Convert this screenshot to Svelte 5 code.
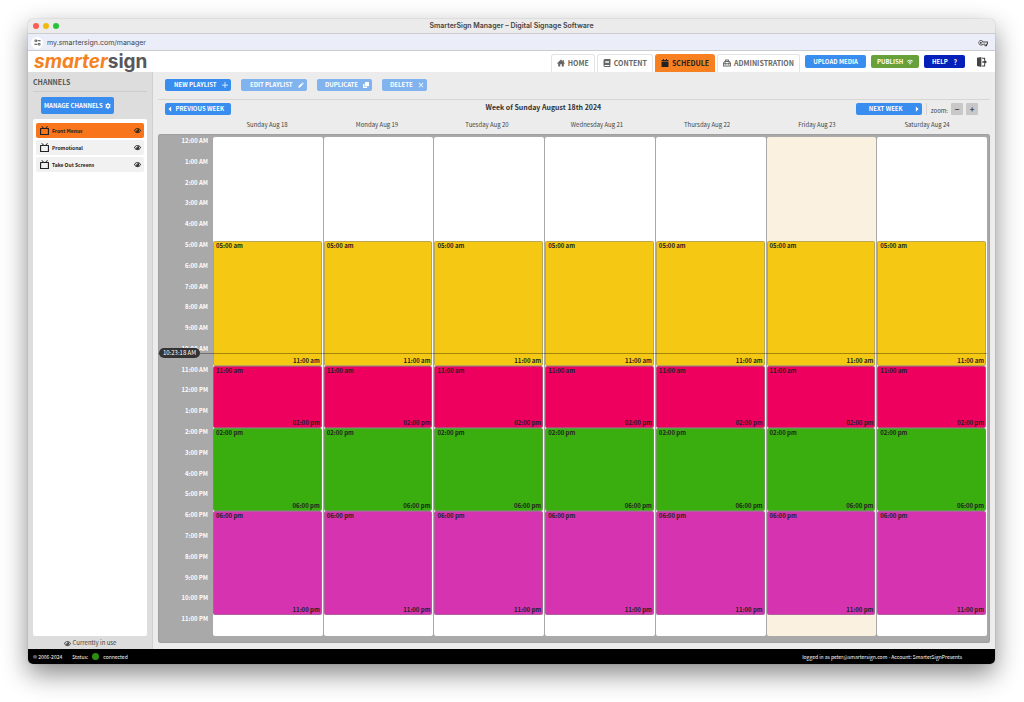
<script>
    let activeChannel = $state("Front Menus");
    let activeTab = $state("Schedule");

    const channels = ["Front Menus", "Promotional", "Take Out Screens"];
    const tabs = [
        { name: "Home", icon: "home" },
        { name: "Content", icon: "book" },
        { name: "Schedule", icon: "calendar" },
        { name: "Administration", icon: "briefcase" }
    ];
    const days = [
        "Sunday Aug 18",
        "Monday Aug 19",
        "Tuesday Aug 20",
        "Wednesday Aug 21",
        "Thursday Aug 22",
        "Friday Aug 23",
        "Saturday Aug 24"
    ];
    const today = "Friday Aug 23";

    const playlists = [
        { start: 5, end: 11, color: "#f5c813" },
        { start: 11, end: 14, color: "#ee005f" },
        { start: 14, end: 18, color: "#3aae0e" },
        { start: 18, end: 23, color: "#d633b0" }
    ];

    const now = { h: 10, m: 23, s: 18 };
    const nowTop = (now.h + now.m / 60 + now.s / 3600) / 24 * 100;

    const hours = Array.from({ length: 24 }, (_, h) => {
        return `${h % 12 || 12}:00 ${h < 12 ? "AM" : "PM"}`;
    });

    function eventTime(h) {
        return `${String(h % 12 || 12).padStart(2, "0")}:00 ${h < 12 ? "am" : "pm"}`;
    }
</script>

{#snippet icon(name)}
    <svg class="icon" viewBox="0 0 16 16" fill="currentColor" aria-hidden="true">
        {#if name === "home"}
            <path d="M8 1 0 8.400l1.200 1.200L2.400 8.600V15h4v-4.500h3.200V15h4V8.600l1.200 1L16 8.400l-2.400-2.200V2h-2v2.300z" />
        {:else if name === "book"}
            <path fill-rule="evenodd" d="M4 0h10q1 0 1 1v10q0 .7-.6 1v2q.6.200.6 1t-1 1H4Q1 16 1 13V3Q1 0 4 0zM4.500 4v1.300h7.500V4zM4.500 6.700V8h7.500V6.700zM4 12q-1 0-1 1t1 1h8.500v-2z" />
        {:else if name === "calendar"}
            <path d="M4 0h2v2h4V0h2v2h2q1 0 1 1v2H1V3q0-1 1-1h2zM1 6h14v9q0 1-1 1H2q-1 0-1-1z" />
        {:else if name === "briefcase"}
            <path fill-rule="evenodd" d="M4 4V2Q4 1 5 1h6q1 0 1 1v2h1l3 4v6q0 1-1 1H1q-1 0-1-1V8l3-4zM5.800 4h4.400V2.800H5.800zM4 5.800 2.200 8.300H4.500V7H6v1.300h4V7h1.500v1.300h2.300L12 5.800zM1.800 10.500v2.700h12.400v-2.700h-2.700v1H10v-1H6v1H4.500v-1z" />
        {:else if name === "plus"}
            <path d="M7 0h2v7h7v2H9v7H7V9H0V7h7z" />
        {:else if name === "pencil"}
            <path d="M12 0.500 15.500 4 13.700 5.800 10.200 2.300zM9.300 3.200l3.500 3.500L5 14.500 0.500 15.500 1.500 11z" />
        {:else if name === "copy"}
            <path d="M6 0h9q1 0 1 1v9q0 1-1 1H6q-1 0-1-1V1q0-1 1-1zM1 5h2.500v7.500H11V15q0 1-1 1H1q-1 0-1-1V6q0-1 1-1z" />
        {:else if name === "close"}
            <path d="m3 1.600 5 5 5-5L14.400 3l-5 5 5 5-1.400 1.400-5-5-5 5L1.600 13l5-5-5-5z" />
        {:else if name === "left"}
            <path d="M11 1v14L4 8z" />
        {:else if name === "right"}
            <path d="M5 1v14l7-7z" />
        {:else if name === "wifi"}
            <path d="M8 15 5.500 11.500q2.500-2 5 0zM0 5.500q8-7 16 0L14.500 7q-6.500-5.500-13 0zM2.800 8.500q5.200-4.500 10.400 0L11.800 10Q8 7 4.200 10z" />
        {:else if name === "gear"}
            <path fill-rule="evenodd" d="M6.500 0h3l.5 2.400 1.300.8 2.400-.8 1.500 2.600-1.900 1.600v1.800l1.900 1.600-1.500 2.600-2.400-.8-1.300.8L9.500 16h-3L6 13.600l-1.300-.8-2.400.8L.8 11l1.900-1.600V7.600L.8 5l1.500-2.600 2.400.8L6 2.400zM8 5.300a2.700 2.700 0 1 0 0 5.400 2.700 2.700 0 0 0 0-5.400z" />
        {:else if name === "eye"}
            <path fill-rule="evenodd" d="M8 2q5.500 0 8 6-2.500 6-8 6T0 8q2.500-6 8-6zm0 1.800Q4 3.800 2 8q2 4.200 6 4.200T14 8q-2-4.200-6-4.200z" />
            <path d="M8 4.200A3.800 3.800 0 1 1 4.200 8H8z" />
        {:else if name === "tv"}
            <path fill-rule="evenodd" d="M3.500 0 7 3.500h2.500L13 0l1 1-2.500 2.500H15q1 0 1 1V15q0 1-1 1H1q-1 0-1-1V4.500q0-1 1-1h4L2.500 1zM2 5.500V14h12V5.500z" />
        {:else if name === "logout"}
            <path d="M0 1 7 0v16l-7-1.500zM8 1h5v4h-1.600V2.600H8zM8 13.400h3.400V11H13v4H8zM8.500 6.800H11.500V4L16 8l-4.500 4V9.200H8.500z" />
        {:else if name === "key"}
            <path fill-rule="evenodd" d="M4.500 3a4.500 4.500 0 0 1 4 2.500H16v5h-1.500V13h-4v-2.500h-2A4.500 4.500 0 1 1 4.500 3zm0 1.400a3.100 3.100 0 1 0 3 4.600h4.400v2.600H13V9h1.600V7H7.500a3.100 3.100 0 0 0-3-2.600zm0 1.400a1.700 1.700 0 1 1 0 3.400 1.700 1.700 0 0 1 0-3.400z" />
        {:else if name === "tune"}
            <path fill-rule="evenodd" d="M4 1a3 3 0 1 1 0 6 3 3 0 0 1 0-6zm0 1.800a1.200 1.200 0 1 0 0 2.400 1.200 1.200 0 0 0 0-2.400zM8 3h7v2H8zM1 11h7v2H1zM12 9a3 3 0 1 1 0 6 3 3 0 0 1 0-6zm0 1.800a1.200 1.200 0 1 0 0 2.400 1.200 1.200 0 0 0 0-2.400z" />
        {/if}
    </svg>
{/snippet}

<div class="window">
    <div class="titlebar">
        <div class="lights"><i class="red"></i><i class="yellow"></i><i class="green"></i></div>
        <span>SmarterSign Manager – Digital Signage Software</span>
    </div>
    <div class="urlbar">
        <span class="site">{@render icon("tune")}</span>
        <span class="url">my.smartersign.com/manager</span>
        <span class="key">{@render icon("key")}</span>
    </div>

    <header>
        <a class="logo" href="/"><span>smarter</span>sign</a>
        <nav>
            {#each tabs as tab}
                <a href="#{tab.icon}" class:active={activeTab === tab.name} onclick={() => activeTab = tab.name}>
                    {@render icon(tab.icon)}{tab.name}
                </a>
            {/each}
        </nav>
        <div class="actions">
            <button class="btn upload">Upload Media</button>
            <button class="btn publish">Publish {@render icon("wifi")}</button>
            <button class="btn help">Help <span class="mark">?</span></button>
        </div>
        <button class="logout" aria-label="Log out">{@render icon("logout")}</button>
    </header>

    <div class="content">
        <aside>
            <h2>Channels</h2>
            <button class="btn manage">Manage Channels {@render icon("gear")}</button>
            <ul class="channels">
                {#each channels as channel}
                    <li>
                        <button class:active={activeChannel === channel} onclick={() => activeChannel = channel}>
                            <span class="tv">{@render icon("tv")}</span>
                            <span class="name">{channel}</span>
                            <span class="eye">{@render icon("eye")}</span>
                        </button>
                    </li>
                {/each}
            </ul>
            <p class="legend"><span class="eye">{@render icon("eye")}</span> Currently in use</p>
        </aside>

        <main>
            <div class="toolbar">
                <button class="btn wide">New Playlist {@render icon("plus")}</button>
                <button class="btn wide" disabled>Edit Playlist {@render icon("pencil")}</button>
                <button class="btn duplicate" disabled>Duplicate {@render icon("copy")}</button>
                <button class="btn delete" disabled>Delete {@render icon("close")}</button>
            </div>
            <div class="weekbar">
                <button class="btn wide prev">{@render icon("left")} Previous Week</button>
                <h1>Week of Sunday August 18th 2024</h1>
                <button class="btn wide next">Next Week {@render icon("right")}</button>
                <div class="zoom">
                    <span>zoom:</span>
                    <button aria-label="Zoom out">−</button>
                    <button aria-label="Zoom in">+</button>
                </div>
            </div>
            <div class="day-names">
                {#each days as day}
                    <span>{day}</span>
                {/each}
            </div>
            <div class="schedule">
                <div class="board">
                    <div class="hours">
                        {#each hours as hour}
                            <span>{hour}</span>
                        {/each}
                    </div>
                    <div class="days">
                        {#each days as day}
                            <div class="day" class:today={day === today}>
                                {#each playlists as item}
                                    <div class="event" style="grid-row: {item.start + 1} / {item.end + 1}; background-color: {item.color}">
                                        <span>{eventTime(item.start)}</span>
                                        <span class="end">{eventTime(item.end)}</span>
                                    </div>
                                {/each}
                            </div>
                        {/each}
                    </div>
                    <div class="now" style="top: {nowTop}%">
                        <span>{now.h}:{now.m}:{now.s} AM</span>
                    </div>
                </div>
            </div>
        </main>
    </div>

    <footer>
        <span>© 2006-2024</span>
        <span class="status">Status: <i></i> connected</span>
        <span class="account">logged in as peter@smartersign.com - Account: SmarterSignPresents</span>
    </footer>
</div>

<style>
:global(body) {
    background: #fff;
    font-family: "Noto Sans CJK SC", "Noto Sans", sans-serif;
    font-size: 6px;
    line-height: 8px;
    color: #444;
}
.window {
    box-sizing: border-box;
    display: flex;
    flex-direction: column;
    min-height: calc(100vh - 57px);
    margin: 19px 29px 38px 28px;
    border-radius: 5px;
    overflow: hidden;
    background: #ececec;
    box-shadow: 0 0 1px #0006, 0 10px 26px #0007;
}
.icon {
    display: block;
    width: 6px;
    height: 6px;
    flex: none;
}
button {
    border: 0;
    padding: 0;
    margin: 0;
    font: inherit;
    color: inherit;
}
a {
    color: inherit;
    text-decoration: none;
}
h1, h2, p, ul {
    margin: 0;
    padding: 0;
}
.titlebar {
    display: grid;
    grid-template-columns: 1fr auto 1fr;
    align-items: center;
    height: 15px;
    padding: 0 5px;
    background: #ebebeb;
    border-bottom: 1px solid #ccc;
    box-sizing: border-box;
    font-family: Inter, sans-serif;
    font-weight: 600;
    font-size: 7px;
}
.lights {
    display: flex;
    gap: 4px;
}
.lights i {
    width: 6px;
    height: 6px;
    border-radius: 50%;
}
.lights .red { background: #fe5b51; }
.lights .yellow { background: #f0b910; }
.lights .green { background: #27c437; }
.urlbar {
    display: flex;
    align-items: center;
    gap: 4px;
    height: 17px;
    padding: 1px 7px 0 3px;
    box-sizing: border-box;
    background: #ebeef8;
    border-bottom: 1px solid #ccc;
    font-family: Inter, sans-serif;
    font-size: 7px;
}
.site {
    display: flex;
    align-items: center;
    justify-content: center;
    width: 12px;
    height: 12px;
    border-radius: 50%;
    background: #fff;
}
.site .icon {
    width: 7px;
    height: 7px;
}
.key {
    margin-left: auto;
}
.key .icon {
    width: 10px;
    height: 10px;
}
header {
    display: flex;
    align-items: flex-end;
    height: 21px;
    padding: 0 8px 0 6px;
    background: #fff;
}
.logo {
    font-family: Inter, sans-serif;
    font-size: 19px;
    line-height: 21px;
    font-weight: 700;
    color: #58585a;
}
.logo span {
    color: #f58220;
    font-style: italic;
}
nav {
    display: flex;
    gap: 2px;
    margin-left: auto;
}
nav a {
    display: flex;
    align-items: center;
    gap: 3px;
    height: 18px;
    padding: 0 5px 2px;
    box-sizing: border-box;
    border: 1px solid #e4e4e4;
    border-bottom: 0;
    border-radius: 3px 3px 0 0;
    font-size: 7px;
    font-weight: 700;
    text-transform: uppercase;
    color: #666;
}
nav a .icon {
    width: 8px;
    height: 8px;
}
nav a.active {
    background: #f98020;
    border-color: #f98020;
    color: #222;
}
.actions {
    display: flex;
    gap: 5px;
    margin: 0 12px 4px 5px;
}
.btn {
    display: flex;
    align-items: center;
    justify-content: space-between;
    height: 12px;
    padding: 0 3px 0 9px;
    box-sizing: border-box;
    border-radius: 2px;
    background: #388dee;
    color: #fff;
    font-weight: 700;
    text-transform: uppercase;
    white-space: nowrap;
}
.btn:disabled {
    background: #81b3ef;
}
.btn.delete, .btn.duplicate {
    padding-left: 8px;
}
.actions .btn {
    height: 13px;
    padding: 0 8px;
}
.btn.upload {
    width: 61px;
    justify-content: center;
}
.actions .publish {
    width: 48px;
    padding: 0 6px;
    background: #68a03a;
}
.btn.help {
    width: 41px;
    background: #0420b8;
}
.mark {
    font-size: 7px;
}
.logout {
    margin-bottom: 5px;
    background: none;
}
.logout .icon {
    width: 10px;
    height: 10px;
}
.content {
    display: flex;
    flex: 1;
}
aside {
    display: flex;
    flex-direction: column;
    flex: none;
    width: 125px;
    padding: 6px 5px 2px;
    box-sizing: border-box;
    background: #ddd;
    border-right: 1px solid #d0d0d0;
}
h2 {
    padding-bottom: 4px;
    border-bottom: 1px solid #ccc;
    font-size: 7px;
    line-height: 9px;
    text-transform: uppercase;
    color: #555;
}
.btn.manage {
    align-self: flex-start;
    width: 73px;
    height: 17px;
    margin: 5px 0 5px 8px;
    padding: 0 3px;
}
.channels {
    flex: 1;
    padding: 4px 3px;
    background: #fff;
    border-radius: 2px;
    list-style: none;
}
.channels button {
    display: flex;
    align-items: center;
    gap: 3px;
    width: 100%;
    height: 15px;
    margin-bottom: 2px;
    padding: 0 3px 0 4px;
    border-radius: 2px;
    background: #f1f1f1;
    color: #222;
    font-size: 5px;
    font-weight: 700;
}
.channels button.active {
    background: #f8751c;
}
.tv .icon {
    width: 9px;
    height: 9px;
}
.eye .icon {
    width: 7px;
    height: 7px;
}
.name {
    flex: 1;
    text-align: left;
}
.legend {
    display: flex;
    align-items: center;
    justify-content: center;
    gap: 2px;
    margin-top: 3px;
}
main {
    flex: 1;
    min-width: 0;
    display: flex;
    flex-direction: column;
    padding: 7px 5px 6px;
}
.toolbar {
    display: flex;
    gap: 10px;
    padding: 0 7px 8px;
    border-bottom: 1px solid #d6d6d6;
}
.wide { width: 66px; }
.duplicate { width: 55px; }
.delete { width: 45px; }
.weekbar {
    display: flex;
    padding: 3px 12px 0 7px;
}
.btn.prev {
    padding: 0 7px 0 2px;
}
.btn.next {
    padding: 0 2px 0 13px;
}
h1 {
    flex: 1;
    font-size: 7px;
    line-height: 8px;
    text-align: center;
    color: #333;
}
.zoom {
    display: flex;
    align-items: flex-end;
    gap: 3px;
    margin-left: 4px;
    padding-left: 4px;
    border-left: 1px solid #d6d6d6;
}
.zoom button {
    width: 12px;
    height: 12px;
    border-radius: 1px;
    background: #c8c8c8;
    font-size: 8px;
    line-height: 12px;
    font-weight: 700;
}
.day-names {
    display: grid;
    grid-template-columns: repeat(7, 1fr);
    padding: 6px 8px 5px 54px;
    text-align: center;
}
.schedule {
    flex: 1;
    display: flex;
    padding: 3px 3px 7px 0;
    background: #a9a9a9;
    border-radius: 3px;
    box-shadow: inset 0 0 1px 1px #9999;
}
.board {
    position: relative;
    display: flex;
    flex: 1;
}
.hours {
    display: grid;
    grid-template-rows: repeat(24, 1fr);
    width: 50px;
    margin-right: 5px;
    text-align: right;
    color: #fff;
    font-weight: 700;
}
.days {
    flex: 1;
    display: grid;
    grid-template-columns: repeat(7, 1fr);
    gap: 1px;
}
.day {
    display: grid;
    grid-template-rows: repeat(24, 1fr);
    border-radius: 2px;
    background: #fff;
}
.day.today {
    background: #fbf1e1;
}
.event {
    display: flex;
    flex-direction: column;
    justify-content: space-between;
    margin-right: 1px;
    padding: 0 1px 0 2px;
    border: 1px solid #8888;
    border-radius: 2px;
    font-weight: 700;
    color: #222;
}
.event .end {
    text-align: right;
}
.now {
    position: absolute;
    left: 0;
    right: 0;
    height: 0;
    border-top: 1px solid #0005;
}
.now span {
    position: absolute;
    top: -6px;
    left: 1px;
    width: 41px;
    height: 10px;
    border-radius: 5px;
    background: #333;
    color: #fff;
    line-height: 10px;
    text-align: center;
}
footer {
    display: flex;
    align-items: center;
    gap: 10px;
    height: 15px;
    padding: 0 33px 0 5px;
    background: #000;
    color: #fff;
    font-size: 5px;
}
.status {
    display: flex;
    align-items: center;
    gap: 4px;
}
.status i {
    width: 7px;
    height: 7px;
    border-radius: 50%;
    background: #2e8b12;
}
.account {
    margin-left: auto;
}
</style>
